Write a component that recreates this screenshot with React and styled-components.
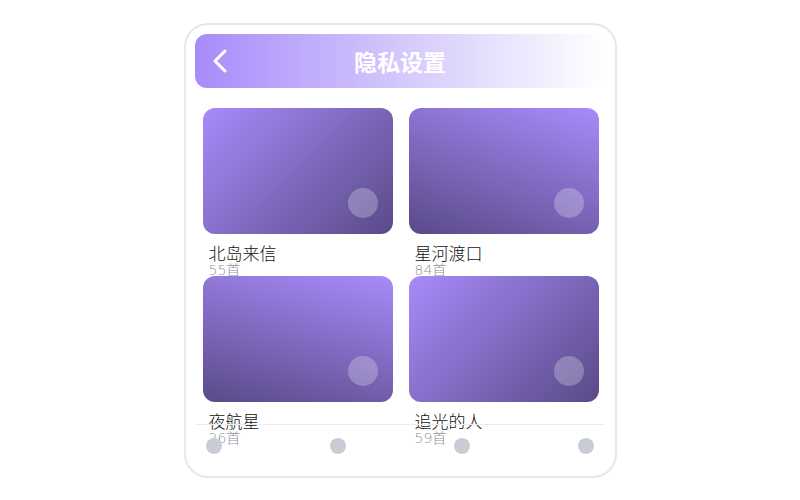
import React from "react";
import styled, { createGlobalStyle } from "styled-components";

const Global = createGlobalStyle`
  html, body { margin: 0; padding: 0; background: #ffffff; }
  body { font-family: "DejaVu Sans", "Noto Sans CJK SC", sans-serif; }
  * { box-sizing: border-box; }
`;

const Page = styled.div`
  width: 800px;
  height: 500px;
  display: flex;
  justify-content: center;
  padding-top: 23px;
`;

const Phone = styled.div`
  position: relative;
  width: 433px;
  height: 455px;
  border: 2px solid #e7e7ec;
  border-radius: 24px;
  background: #fff;
  padding: 9px 9px 0 9px;
  overflow: hidden;
  display: flex;
  flex-direction: column;
`;

const Header = styled.div`
  position: relative;
  height: 54px;
  border-radius: 12px;
  background: linear-gradient(90deg, #a78bfa 0%, #d4c8fc 50%, #ffffff 100%);
  display: flex;
  align-items: center;
  justify-content: center;
  flex-shrink: 0;
`;

const Back = styled.button`
  position: absolute;
  left: 14px;
  top: 50%;
  transform: translateY(-50%);
  border: 0;
  background: none;
  padding: 0;
  width: 24px;
  height: 24px;
  display: flex;
  align-items: center;
  justify-content: center;
`;

const Title = styled.h1`
  margin: 0;
  font-family: "Noto Sans CJK SC", sans-serif;
  font-size: 23px;
  font-weight: 700;
  color: #ffffff;
`;

const Grid = styled.div`
  display: grid;
  grid-template-columns: 190px 190px;
  column-gap: 16px;
  row-gap: 0;
  padding: 20px 8px 0 8px;
`;

const Item = styled.div`
  display: flex;
  flex-direction: column;
`;

const Cover = styled.div`
  position: relative;
  height: 126px;
  border-radius: 12px;
  background: linear-gradient(${(p) => p.$angle}, #a78bfa 0%, #5a4a88 100%);
`;

const Dot = styled.div`
  position: absolute;
  right: 15px;
  bottom: 16px;
  width: 30px;
  height: 30px;
  border-radius: 50%;
  background: rgba(255, 255, 255, 0.25);
`;

const Name = styled.div`
  margin-top: 10px;
  padding-left: 6px;
  font-size: 17px;
  font-weight: 300;
  line-height: 21px;
  color: #111;
`;

const Count = styled.div`
  padding-left: 6px;
  font-size: 14px;
  font-weight: 300;
  line-height: 11px;
  color: #8e939b;
`;

const Nav = styled.div`
  position: absolute;
  left: 10px;
  right: 10px;
  bottom: 0;
  height: 52px;
  border-top: 1px solid #ececf0;
  display: flex;
  justify-content: space-between;
  align-items: flex-start;
  padding: 13px 10px 0 10px;
`;

const NavDot = styled.div`
  width: 16px;
  height: 16px;
  border-radius: 50%;
  background: #c8ccd4;
`;

const items = [
  { name: "北岛来信", count: "55首", angle: "135deg" },
  { name: "星河渡口", count: "84首", angle: "200deg" },
  { name: "夜航星", count: "26首", angle: "195deg" },
  { name: "追光的人", count: "59首", angle: "135deg" },
];

export default function App() {
  return (
    <>
      <Global />
      <Page>
        <Phone>
          <Header>
            <Back aria-label="返回">
              <svg width="16" height="24" viewBox="0 0 16 24">
                <polyline
                  points="12,2 2,12 12,22"
                  fill="none"
                  stroke="#fff"
                  strokeWidth="3"
                  strokeLinecap="round"
                  strokeLinejoin="round"
                />
              </svg>
            </Back>
            <Title>隐私设置</Title>
          </Header>
          <Grid>
            {items.map((it) => (
              <Item key={it.name}>
                <Cover $angle={it.angle}>
                  <Dot />
                </Cover>
                <Name>{it.name}</Name>
                <Count>{it.count}</Count>
              </Item>
            ))}
          </Grid>
          <Nav>
            <NavDot />
            <NavDot />
            <NavDot />
            <NavDot />
          </Nav>
        </Phone>
      </Page>
    </>
  );
}
